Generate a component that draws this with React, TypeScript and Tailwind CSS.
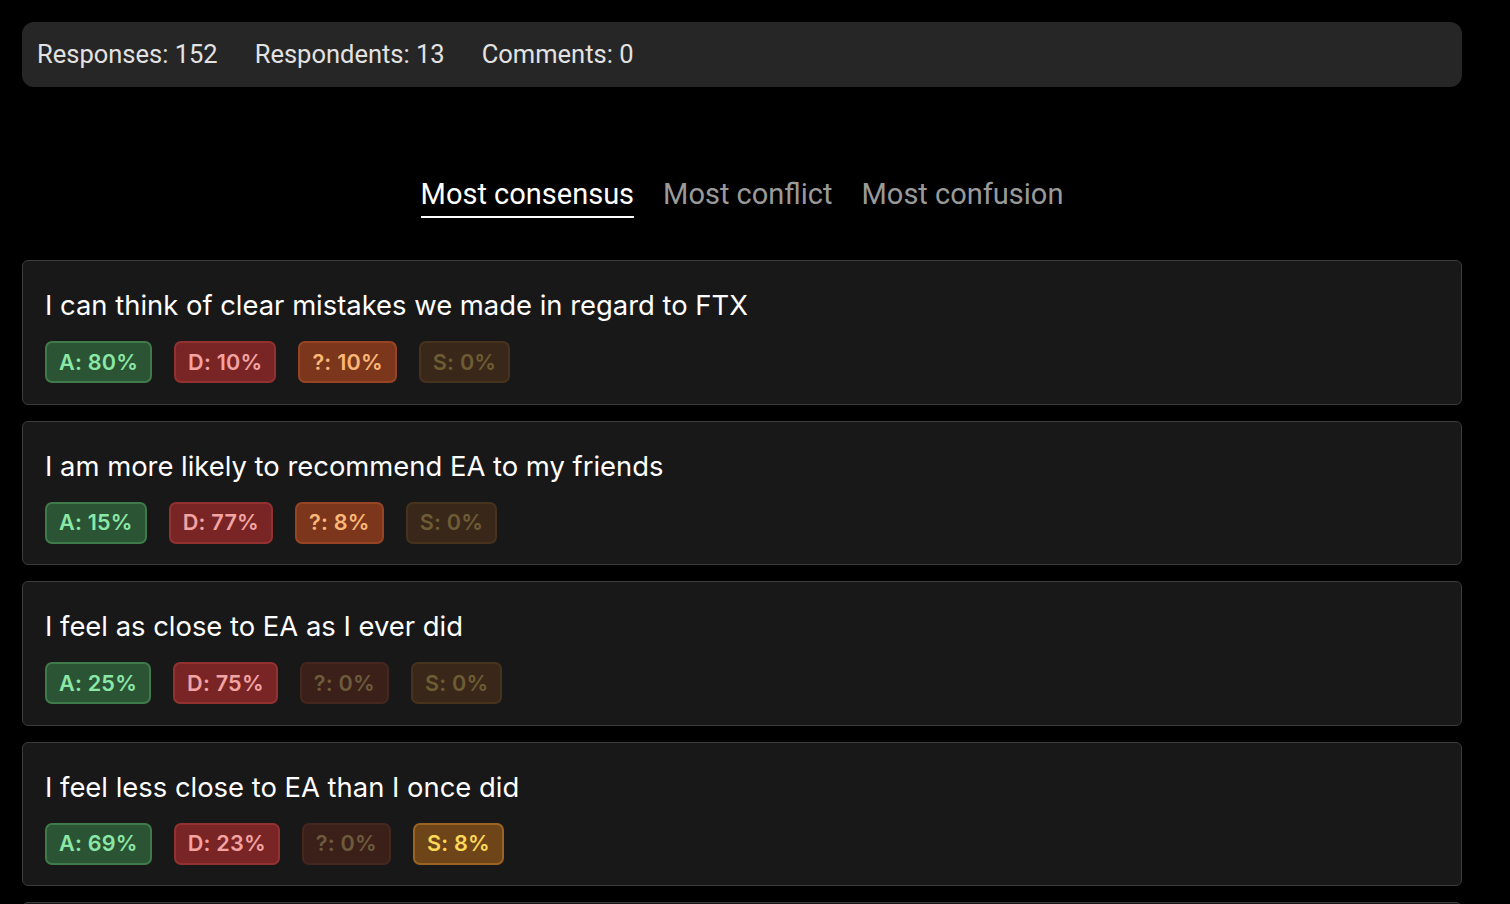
import { type FC } from 'react';

type Tone = 'agree' | 'disagree' | 'unsure' | 'skip';

interface Statement {
  id: number;
  text: string;
  agree: number;
  disagree: number;
  unsure: number;
  skip: number;
}

const statements: Statement[] = [
  { id: 1, text: 'I can think of clear mistakes we made in regard to FTX', agree: 80, disagree: 10, unsure: 10, skip: 0 },
  { id: 2, text: 'I am more likely to recommend EA to my friends', agree: 15, disagree: 77, unsure: 8, skip: 0 },
  { id: 3, text: 'I feel as close to EA as I ever did', agree: 25, disagree: 75, unsure: 0, skip: 0 },
  { id: 4, text: 'I feel less close to EA than I once did', agree: 69, disagree: 23, unsure: 0, skip: 8 },
  { id: 5, text: 'I think EA should change its name', agree: 8, disagree: 62, unsure: 30, skip: 0 },
];

// active / muted colour sets per vote kind
const toneClasses: Record<Tone, { on: string; off: string }> = {
  agree: {
    on: 'bg-[#2a5434] border-[#3f7a4b] text-[#8ae8a6]',
    off: 'bg-[#1d2e20] border-[#26402b] text-[#4a6b50]',
  },
  disagree: {
    on: 'bg-[#792525] border-[#933131] text-[#f4a3a3]',
    off: 'bg-[#3a1c1c] border-[#4a2424] text-[#6b4040]',
  },
  unsure: {
    on: 'bg-[#7b361c] border-[#964424] text-[#fbb777]',
    off: 'bg-[#3b2019] border-[#45271d] text-[#6e5a3c]',
  },
  skip: {
    on: 'bg-[#6e4519] border-[#9c6422] text-[#fcd857]',
    off: 'bg-[#392819] border-[#46321d] text-[#6e5c34]',
  },
};

const Badge: FC<{ tone: Tone; label: string; value: number }> = ({ tone, label, value }) => {
  const cls = value > 0 ? toneClasses[tone].on : toneClasses[tone].off;
  return (
    <span
      className={`inline-flex h-[42px] items-center rounded-[7px] border-2 px-[12px] text-[21.6px] font-semibold tracking-[0.01em] ${cls}`}
    >
      {label}: {value}%
    </span>
  );
};

const StatementCard: FC<{ s: Statement }> = ({ s }) => (
  <div className="rounded-[6px] border border-[#3b3b3b] bg-[#181818] px-[22px] pb-[20.5px] pt-[26px]">
    <p className="text-[27.4px] leading-[36px] text-white">{s.text}</p>
    <div className="mt-[18px] flex gap-[22px]">
      <Badge tone="agree" label="A" value={s.agree} />
      <Badge tone="disagree" label="D" value={s.disagree} />
      <Badge tone="unsure" label="?" value={s.unsure} />
      <Badge tone="skip" label="S" value={s.skip} />
    </div>
  </div>
);

const tabs = ['Most consensus', 'Most conflict', 'Most confusion'];

export default function App() {
  return (
    <div className="min-h-screen bg-black pb-10 pl-[22px] pt-[22px]" style={{ fontFamily: 'Inter, "Noto Sans", sans-serif' }}>
      <div className="w-[1440px]">
        {/* Stats bar */}
        <div
          className="flex h-[65px] items-center gap-[37px] rounded-[12px] bg-[#262626] px-[15px] text-[25.5px] text-[#e2e2e2]"
          style={{ fontFamily: 'Roboto, "Liberation Sans", sans-serif' }}
        >
          <span>Responses: 152</span>
          <span>Respondents: 13</span>
          <span>Comments: 0</span>
        </div>

        {/* Tabs */}
        <div
          className="mt-[89px] flex justify-center gap-[29px] text-[29px]"
          style={{ fontFamily: 'Roboto, "Liberation Sans", sans-serif' }}
        >
          {tabs.map((t, i) => (
            <button
              key={t}
              className={
                i === 0
                  ? 'border-b-2 border-white pb-[4px] leading-[36px] text-white'
                  : 'border-b-2 border-transparent pb-[4px] leading-[36px] text-[#9a9a9a]'
              }
            >
              {t}
            </button>
          ))}
        </div>

        {/* Statement list */}
        <div className="mt-[42px] flex flex-col gap-[16px]">
          {statements.map((s) => (
            <StatementCard key={s.id} s={s} />
          ))}
        </div>
      </div>
    </div>
  );
}
